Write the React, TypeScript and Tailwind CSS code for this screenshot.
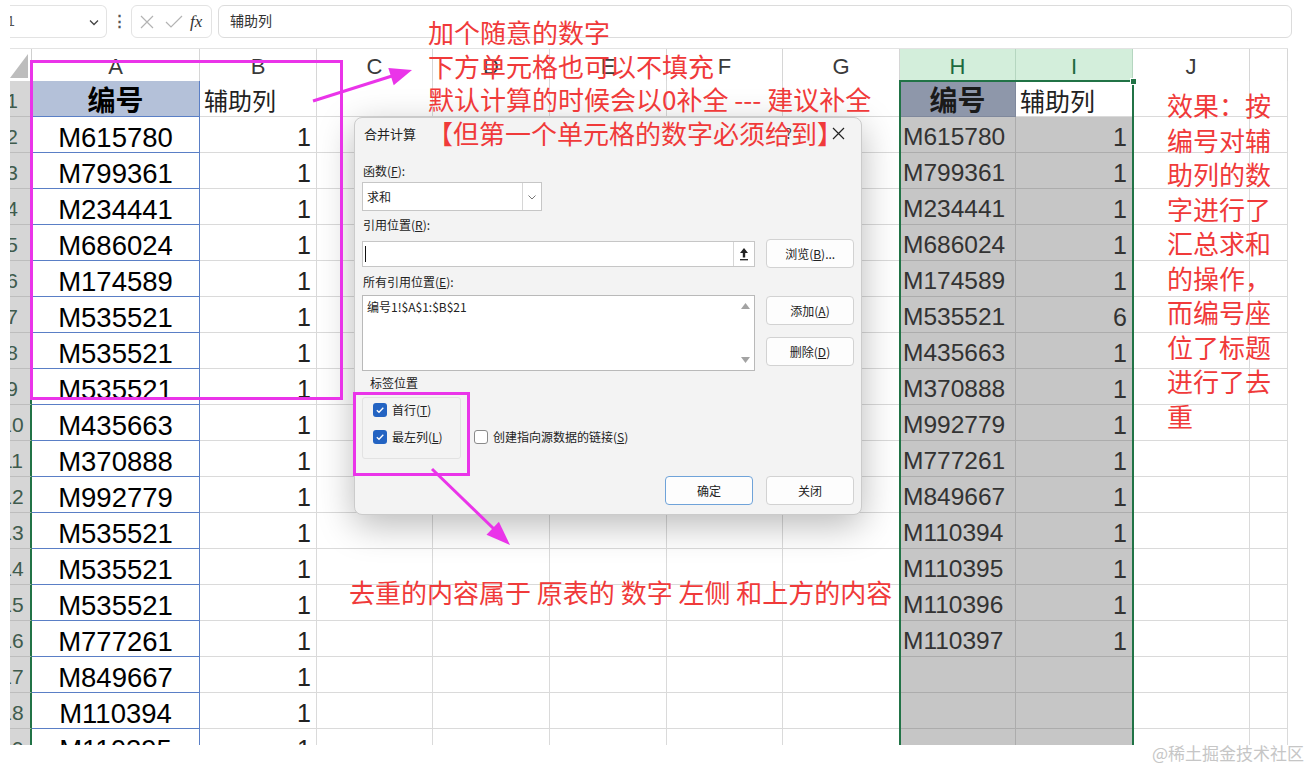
import React from 'react';

const GRID =
  'grid grid-cols-[22px_168px_117px_116px_117px_117px_116px_117px_116px_117px_117px_38px]';

const letters = ['', 'A', 'B', 'C', 'D', 'E', 'F', 'G', 'H', 'I', 'J', ''];

const colA = [
  'M615780', 'M799361', 'M234441', 'M686024', 'M174589', 'M535521',
  'M535521', 'M535521', 'M435663', 'M370888', 'M992779', 'M535521',
  'M535521', 'M535521', 'M777261', 'M849667', 'M110394', 'M110395',
];

const colH: [string, number][] = [
  ['M615780', 1], ['M799361', 1], ['M234441', 1], ['M686024', 1],
  ['M174589', 1], ['M535521', 6], ['M435663', 1], ['M370888', 1],
  ['M992779', 1], ['M777261', 1], ['M849667', 1], ['M110394', 1],
  ['M110395', 1], ['M110396', 1], ['M110397', 1],
];

const rightNote = [
  '效果：按', '编号对辅', '助列的数', '字进行了', '汇总求和',
  '的操作，', '而编号座', '位了标题', '进行了去', '重',
];

const FormulaBar = () => (
  <div className="mt-[5px] mb-[10px] flex h-[33px] items-stretch text-[#333]">
    <div className="ml-[10px] flex w-[97px] items-center justify-between overflow-hidden rounded-r-[6px] border border-l-0 border-[#e3e3e3] bg-white pr-[6px]">
      <span className="-ml-[3px] text-[14px] text-[#555]">1</span>
      <svg width="12" height="12" viewBox="0 0 12 12">
        <path d="M2 4.5 L6 8.5 L10 4.5" fill="none" stroke="#444" strokeWidth="1.3" />
      </svg>
    </div>
    <div className="flex w-[24px] items-center justify-center text-[15px] font-bold text-[#555]">⋮</div>
    <div className="flex w-[81px] items-center rounded-[6px] border border-[#e3e3e3] bg-white">
      <svg className="ml-[7px]" width="16" height="16" viewBox="0 0 16 16">
        <path d="M2 2 L14 14 M14 2 L2 14" stroke="#b3b3b3" strokeWidth="1.2" />
      </svg>
      <svg className="ml-[10px]" width="18" height="16" viewBox="0 0 18 16">
        <path d="M1 8 L6 13 L17 2" fill="none" stroke="#b3b3b3" strokeWidth="1.2" />
      </svg>
      <span className="ml-[7px] font-['Liberation_Serif',serif] text-[17px] italic text-[#333]">fx</span>
    </div>
    <div className="ml-[6px] mr-[18px] flex flex-1 items-center rounded-[6px] border border-[#dcdcdc] bg-white pl-[11px] text-[14px] text-[#333]">
      辅助列
    </div>
  </div>
);

const Corner = () => (
  <div className="border-b border-r border-[#cfcfcf] bg-white">
    <svg width="22" height="32" viewBox="0 0 22 32">
      <polygon points="0,29 18,5 18,29" fill="#bdbdbd" />
    </svg>
  </div>
);

const HeaderRow = () => (
  <div className={`${GRID} h-[33px] grid-rows-[33px] border-t border-[#e3e3e3]`}>
    {letters.map((l, i) =>
      i === 0 ? (
        <Corner key={i} />
      ) : (
        <div
          key={i}
          className={
            i === 8 || i === 9
              ? 'flex items-center justify-center border-b border-r border-b-[#a9cdb5] border-r-[#b5d6c0] bg-[#d3eedb] pt-[3px] text-[22px] leading-none text-[#1d6a3e]'
              : 'flex items-center justify-center border-b border-r border-b-[#c8c8c8] border-r-[#d6d6d6] bg-white pt-[3px] text-[22px] leading-none text-[#3a3a3a]'
          }
        >
          {l}
        </div>
      )
    )}
  </div>
);

const RowHead = ({ n }: { n: number }) => (
  <div className="flex items-center overflow-hidden border-b border-r-2 border-b-[#bdbdbd] border-r-[#217346] bg-[#d6d6d6]">
    <div className="-ml-[18px] w-[40px] shrink-0 pt-[4px] text-center text-[21px] leading-none text-[#3f5b4d]">{n}</div>
  </div>
);

const Empty = () => <div className="border-b border-r border-[#dadada] bg-white" />;

const BodyRow = ({ r }: { r: number }) => {
  const h = colH[r - 2];
  return (
    <div className={`${GRID} h-[36px] grid-rows-[36px]`}>
      <RowHead n={r} />
      {r === 1 ? (
        <div className="flex items-center justify-center overflow-hidden border-b border-r border-[#5a7fc6] bg-[#b4c1d9] pt-[7px] text-[28px] leading-none font-bold text-black">
          编号
        </div>
      ) : (
        <div className="flex items-center justify-center overflow-hidden border-b border-r border-[#5a7fc6] bg-white pt-[6px] text-[27.5px] leading-none text-black">
          {colA[r - 2]}
        </div>
      )}
      {r === 1 ? (
        <div className="flex items-center overflow-hidden border-b border-r border-[#dadada] bg-white pl-[4px] pt-[7px] text-[24px] leading-none text-[#222]">
          辅助列
        </div>
      ) : (
        <div className="flex items-center justify-end overflow-hidden border-b border-r border-[#dadada] bg-white pr-[5px] pt-[6px] text-[25px] leading-none text-[#222]">
          1
        </div>
      )}
      <Empty />
      <Empty />
      <Empty />
      <Empty />
      <Empty />
      {r === 1 ? (
        <div className="flex items-center justify-center overflow-hidden border-b border-r border-[#7f889c] bg-[#8e97aa] pt-[7px] text-[28px] leading-none font-bold text-[#1a1a1a]">
          编号
        </div>
      ) : (
        <div className="flex items-center overflow-hidden border-b border-r border-[#acacac] bg-[#c6c6c6] pl-[3px] pt-[6px] text-[24.5px] leading-none text-[#333]">
          {h ? h[0] : ''}
        </div>
      )}
      {r === 1 ? (
        <div className="flex items-center overflow-hidden border-b border-r border-[#dadada] bg-white pl-[4px] pt-[7px] text-[25px] leading-none text-[#222]">
          辅助列
        </div>
      ) : (
        <div className="flex items-center justify-end overflow-hidden border-b border-r border-[#acacac] bg-[#c6c6c6] pr-[5px] pt-[6px] text-[25px] leading-none text-[#333]">
          {h ? h[1] : ''}
        </div>
      )}
      <Empty />
      <Empty />
    </div>
  );
};

const Btn = ({ children, className = '' }: { children: React.ReactNode; className?: string }) => (
  <div
    className={`flex h-[29px] w-[88px] items-center justify-center rounded-[4px] border bg-[#fdfdfd] text-[12px] text-[#222] ${className}`}
  >
    {children}
  </div>
);

const Check = ({ checked, children }: { checked?: boolean; children: React.ReactNode }) => (
  <div className="flex h-[16px] items-center gap-[5px]">
    {checked ? (
      <span className="flex h-[14px] w-[14px] items-center justify-center rounded-[3px] bg-[#2363c2]">
        <svg width="10" height="10" viewBox="0 0 10 10">
          <path d="M1.8 5.2 L4 7.3 L8.3 2.8" fill="none" stroke="white" strokeWidth="1.3" />
        </svg>
      </span>
    ) : (
      <span className="h-[14px] w-[14px] rounded-[3px] border border-[#8a8a8a] bg-white" />
    )}
    <span>{children}</span>
  </div>
);

const Dialog = () => (
  <div className="absolute left-[354px] top-[117px] h-[398px] w-[508px] rounded-[8px] border border-[#cbcbcb] bg-[#f3f3f3] font-['Noto_Sans_CJK_SC','Liberation_Sans',sans-serif] text-[12px] text-[#222] shadow-[0_10px_36px_rgba(0,0,0,0.28)]">
    <div className="flex h-[28px] items-center pl-[9px] pr-[16px]">
      <span className="pt-[3px] text-[13px]">合并计算</span>
      <span className="ml-auto mr-[40px] pt-[3px] text-[14px] text-[#444]">?</span>
      <svg width="13" height="13" viewBox="0 0 13 13" className="mt-[3px]">
        <path d="M1 1 L12 12 M12 1 L1 12" stroke="#222" strokeWidth="1.2" />
      </svg>
    </div>
    <div className="px-[7px]">
      <div className="mt-[17px] h-[16px] pl-[1px] leading-[16px]">
        函数(<span className="underline">F</span>):
      </div>
      <div className="mt-[3px] flex h-[29px] w-[180px] items-stretch border border-[#c6c6c6] bg-white">
        <div className="flex flex-1 items-center pl-[4px]">求和</div>
        <div className="flex w-[19px] items-center justify-center border-l border-[#d6d6d6]">
          <svg width="10" height="10" viewBox="0 0 10 10">
            <path d="M1.5 3.5 L5 7 L8.5 3.5" fill="none" stroke="#777" strokeWidth="1" />
          </svg>
        </div>
      </div>
      <div className="mt-[6px] h-[16px] pl-[1px] leading-[16px]">
        引用位置(<span className="underline">R</span>):
      </div>
      <div className="mt-[6px] flex h-[29px] items-center">
        <div className="flex h-[26px] w-[395px] border border-[#c6c6c6] bg-white">
          <div className="flex flex-1 items-center pl-[2px]">
            <div className="h-[16px] w-px bg-[#111]" />
          </div>
          <div className="flex w-[21px] items-center justify-center border-l border-[#d6d6d6]">
            <svg width="10" height="14" viewBox="0 0 10 14">
              <path d="M5 1 L9 6 L6.2 6 L6.2 10.5 L3.8 10.5 L3.8 6 L1 6 Z" fill="#222" />
              <path d="M1 12.7 L9 12.7" stroke="#222" strokeWidth="1.3" />
            </svg>
          </div>
        </div>
        <Btn className="ml-[11px] border-[#d2d2d2]">
          浏览(<span className="underline">B</span>)...
        </Btn>
      </div>
      <div className="mt-[6px] h-[16px] pl-[1px] leading-[16px]">
        所有引用位置(<span className="underline">E</span>):
      </div>
      <div className="mt-[5px] flex">
        <div className="flex h-[76px] w-[395px] border border-[#b9b9b9] bg-white">
          <div className="flex-1 pl-[4px] pt-[3px] leading-[16px]">编号1!$A$1:$B$21</div>
          <div className="flex w-[18px] flex-col items-center justify-between py-[7px]">
            <svg width="9" height="6" viewBox="0 0 9 6">
              <polygon points="4.5,0 9,6 0,6" fill="#a3a3a3" />
            </svg>
            <svg width="9" height="6" viewBox="0 0 9 6">
              <polygon points="0,0 9,0 4.5,6" fill="#a3a3a3" />
            </svg>
          </div>
        </div>
        <div className="ml-[11px] flex flex-col">
          <Btn className="mt-[1px] border-[#d2d2d2]">
            添加(<span className="underline">A</span>)
          </Btn>
          <Btn className="mt-[12px] border-[#d2d2d2]">
            删除(<span className="underline">D</span>)
          </Btn>
        </div>
      </div>
      <div className="mt-[4px] h-[16px] pl-[8px] leading-[16px]">标签位置</div>
      <div className="mt-[6px] flex items-end">
        <div className="flex h-[62px] w-[99px] flex-col gap-[11px] rounded-[3px] border border-[#e2e2e2] pl-[10px] pt-[4px]">
          <Check checked>
            首行(<span className="underline">T</span>)
          </Check>
          <Check checked>
            最左列(<span className="underline">L</span>)
          </Check>
        </div>
        <div className="mb-[14px] ml-[13px]">
          <Check>
            创建指向源数据的链接(<span className="underline">S</span>)
          </Check>
        </div>
      </div>
      <div className="mt-[17px] flex justify-end gap-[13px]">
        <Btn className="border-[#6fa3d9]">确定</Btn>
        <Btn className="w-[87px] border-[#d2d2d2]">关闭</Btn>
      </div>
    </div>
  </div>
);

const Arrows = () => (
  <svg className="pointer-events-none absolute left-0 top-0" width="1310" height="768" viewBox="0 0 1310 768">
    <line x1="313" y1="101" x2="392" y2="76" stroke="#ea34e9" strokeWidth="3" />
    <polygon points="412,70 393.7,85.2 388.3,68" fill="#ea34e9" />
    <line x1="432" y1="469" x2="494" y2="529" stroke="#ea34e9" strokeWidth="3" />
    <polygon points="510,545 486.5,534.8 498.9,521.8" fill="#ea34e9" />
  </svg>
);

export default function App() {
  const rows = Array.from({ length: 19 }, (_, i) => i + 1);
  return (
    <div className="relative h-[768px] w-[1310px] overflow-hidden bg-white font-['Liberation_Sans','Noto_Sans_CJK_SC',sans-serif]">
      <FormulaBar />

      <div className="relative ml-[10px] h-[697px] w-[1278px] overflow-hidden">
        <HeaderRow />
        {rows.map((r) => (
          <BodyRow key={r} r={r} />
        ))}
        {/* selection H1:I19 */}
        <div className="absolute left-[889px] top-[32px] h-[720px] w-[235px] border-2 border-[#217346]" />
        <div className="absolute left-[1120px] top-[30px] h-[7px] w-[7px] border border-white bg-[#217346]" />
      </div>

      <Dialog />

      {/* annotations */}
      <div className="absolute left-[30px] top-[60px] h-[340px] w-[313px] border-[3px] border-[#ea34e9]" />
      <div className="absolute left-[353px] top-[392px] h-[84px] w-[117px] border-[3px] border-[#ea34e9]" />
      <Arrows />

      <div className="absolute left-[428px] top-[15px] font-['Noto_Sans_CJK_SC',sans-serif] text-[26px] leading-[33.5px] text-[#f03a3a]">
        <div>加个随意的数字</div>
        <div>下方单元格也可以不填充</div>
        <div>默认计算的时候会以0补全 --- 建议补全</div>
      </div>
      <div className="absolute left-[427px] top-[116px] font-['Noto_Sans_CJK_SC',sans-serif] text-[26px] leading-[34px] text-[#f03a3a]">
        【但第一个单元格的数字必须给到】
      </div>
      <div className="absolute left-[1167px] top-[88px] font-['Noto_Sans_CJK_SC',sans-serif] text-[26px] leading-[34.5px] text-[#f03a3a]">
        {rightNote.map((t) => (
          <div key={t}>{t}</div>
        ))}
      </div>
      <div className="absolute left-[349px] top-[575px] whitespace-pre font-['Noto_Sans_CJK_SC',sans-serif] text-[26px] leading-[34px] text-[#f03a3a]">
        去重的内容属于 原表的 数字 左侧 和上方的内容
      </div>

      <div className="absolute right-[6px] top-[741px] font-['Noto_Sans_CJK_SC',sans-serif] text-[17px] leading-[24px] text-[#c6c6c6]">
        @稀土掘金技术社区
      </div>
    </div>
  );
}
